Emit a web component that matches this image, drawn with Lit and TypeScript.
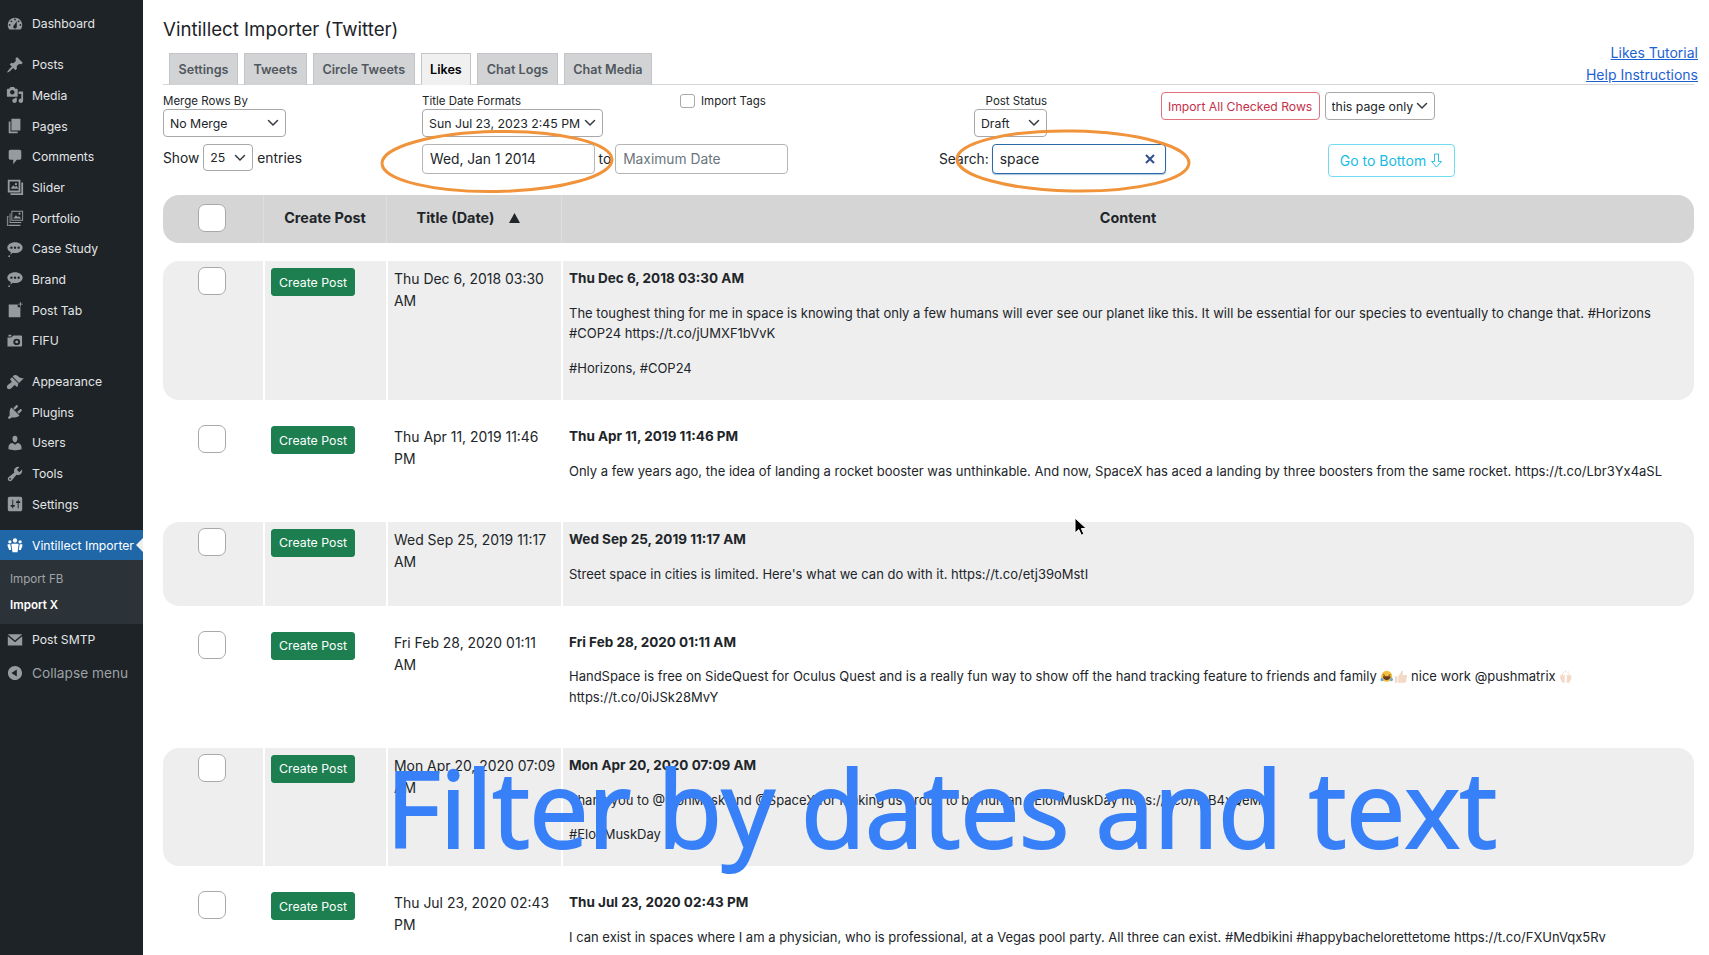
import { LitElement, html, css, svg } from 'lit';
import { customElement } from 'lit/decorators.js';

const chevron = `url("data:image/svg+xml,%3Csvg xmlns='http://www.w3.org/2000/svg' width='12' height='8' viewBox='0 0 12 8'%3E%3Cpath d='M1.500 1.500L6 6l4.500-4.500' fill='none' stroke='%23343a40' stroke-width='1.500' stroke-linecap='round'/%3E%3C/svg%3E")`;

const bubble = svg`<path d="M10 2.500c4.700 0 8.500 2.700 8.500 6s-3.800 6-8.500 6c-.900 0-1.800-.100-2.600-.300L5 16.500l.300-3.300C3 12.100 1.500 10.400 1.500 8.500c0-3.300 3.800-6 8.500-6z"/><circle cx="3.500" cy="18" r="1"/><circle cx="6" cy="8.500" r="1.300" fill="#1d2327"/><circle cx="10" cy="8.500" r="1.300" fill="#1d2327"/><circle cx="14" cy="8.500" r="1.300" fill="#1d2327"/>`;

const icons: Record<string, unknown> = {
  dashboard: svg`<path d="M3.760 16h12.480c1.100-1.370 1.760-3.110 1.760-5 0-4.420-3.580-8-8-8s-8 3.580-8 8c0 1.890.660 3.630 1.760 5zM10 4c.550 0 1 .450 1 1s-.450 1-1 1-1-.450-1-1 .450-1 1-1zM6 6c.550 0 1 .450 1 1s-.450 1-1 1-1-.450-1-1 .450-1 1-1zm8 0c.550 0 1 .450 1 1s-.450 1-1 1-1-.450-1-1 .450-1 1-1zm-5.370 5.550L12 7v6c0 1.100-.900 2-2 2s-2-.900-2-2c0-.570.240-1.080.630-1.450zM4 10c.550 0 1 .450 1 1s-.450 1-1 1-1-.450-1-1 .450-1 1-1zm12 0c.550 0 1 .450 1 1s-.450 1-1 1-1-.450-1-1 .450-1 1-1z" fill-rule="evenodd"/>`,
  pin: svg`<path d="M10.440 3.020l1.820-1.820 6.360 6.350-1.830 1.820c-1.050-.680-2.480-.570-3.410.360l-.750.750c-.920.930-1.040 2.350-.350 3.410l-1.830 1.820-2.410-2.410-2.800 2.790c-.420.420-3.380 2.710-3.800 2.290s1.860-3.390 2.280-3.810l2.790-2.790L4.100 9.360l1.830-1.820c1.050.690 2.480.57 3.400-.360l.750-.750c.930-.920 1.050-2.350.360-3.410z"/>`,
  media: svg`<path fill-rule="evenodd" d="M13 11V4c0-.550-.450-1-1-1h-1.670L9 1H5L3.670 3H2c-.550 0-1 .450-1 1v7c0 .550.450 1 1 1h10c.550 0 1-.450 1-1zM7 4.500c1.380 0 2.500 1.120 2.500 2.500S8.380 9.500 7 9.500 4.500 8.380 4.500 7 5.620 4.500 7 4.500zM14 6h5v10.500c0 1.380-1.120 2.500-2.500 2.500S14 17.880 14 16.500s1.120-2.500 2.500-2.500c.170 0 .340.020.500.050V9h-3V6zm-4 8.050V13h2v3.500c0 1.380-1.120 2.500-2.500 2.500S7 17.880 7 16.500 8.120 14 9.500 14c.170 0 .340.020.500.050z"/>`,
  page: svg`<path d="M6 15V2h10v13H6zm-1 1h8v2H3V5h2v11z"/>`,
  comments: svg`<path d="M5 2h10c1.100 0 2 .900 2 2v7c0 1.100-.900 2-2 2h-3l-4 5v-5H5c-1.100 0-2-.900-2-2V4c0-1.100.900-2 2-2z"/>`,
  slider: svg`<path fill-rule="evenodd" d="M2 2h14v14H2V2zm2 2v10h10V4H4zm1 8l3-4 2 2 1.500-1.500L14 12H5zm6-6.500a1.300 1.300 0 1 1 0 2.600 1.300 1.300 0 0 1 0-2.600zM17 5h2v14H5v-2h12V5z"/>`,
  portfolio: svg`<path fill-rule="evenodd" d="M6 2h13v11H6V2zm1 1v9h11V3H7zm1 7.500l3-3.500 2 2 1.500-1L17 10.500H8zM15 4a1.200 1.200 0 1 1 0 2.400A1.200 1.200 0 0 1 15 4zM4 5h1v9.500h12v1H4V5zM1 8h2v9.500h13v1.500H1V8zm1 1v9.500h.8V9z"/>`,
  bubble,
  postTab: svg`<path fill-rule="evenodd" d="M3 4h10v3h3v11H3V4zM15.500 1h1v2h2v1h-2v2h-1V4h-2V3h2V1z"/>`,
  camera: svg`<path fill-rule="evenodd" d="M3 3h3v2H3V3zm-1 3h4l2-2h8c.600 0 1 .400 1 1v10c0 .600-.400 1-1 1H2V6zm9.500 1.500a3.500 3.500 0 1 0 0 7 3.500 3.500 0 0 0 0-7zm0 2a1.500 1.500 0 1 1 0 3 1.500 1.500 0 0 1 0-3z" transform="translate(-.500 0) scale(1.080 1)"/>`,
  appearance: svg`<path d="M14.480 11.060L7.410 3.990l1.500-1.500c.500-.560 2.300-.470 3.510.320 1.210.800 1.430 1.280 2.910 2.100 1.180.640 2.450 1.260 4.450.850zm-.710.710L6.700 4.700 4.930 6.470c-.390.390-.390 1.020 0 1.410l1.060 1.060c.390.390.390 1.030 0 1.420-.600.600-1.430 1.110-2.210 1.690-.350.260-.700.530-1.010.840C1.430 13.710 1 14.650 1 15.650 1 16.630 1.800 18 3.500 18c1.030 0 1.980-.420 2.820-1.260.500-.500 2.010-2.200 2.660-2.870.380-.380 1.030-.390 1.420 0l1.060 1.060c.390.390 1.020.390 1.410 0z"/>`,
  plugins: svg`<path d="M13.110 4.360L9.870 7.600 8 5.730l3.240-3.240c.350-.340 1.050-.200 1.560.320.520.510.660 1.210.310 1.550zm-8 1.770l.910-1.120 9.010 9.010-1.190.840c-.710.710-2.630 1.160-3.820 1.160H6.140L4.900 17.260c-.590.590-1.540.590-2.120 0-.590-.580-.590-1.530 0-2.120l1.240-1.240v-3.880c0-1.130.400-3.190 1.090-3.890zm7.260 3.970l3.240-3.240c.340-.350 1.040-.210 1.550.310.520.510.660 1.210.310 1.550l-3.240 3.250z"/>`,
  users: svg`<path d="M10 9.250c-2.270 0-2.730-3.440-2.730-3.440C7 4.020 7.820 2 9.970 2c2.160 0 2.980 2.020 2.710 3.810 0 0-.410 3.440-2.680 3.440zm0 2.570L12.720 10c2.390 0 4.520 2.330 4.520 4.530v2.490s-3.650 1.130-7.240 1.130c-3.650 0-7.240-1.130-7.240-1.130v-2.490c0-2.250 1.940-4.480 4.470-4.480z"/>`,
  tools: svg`<path fill-rule="evenodd" d="M16.680 9.770c-1.340 1.340-3.300 1.670-4.950.990l-5.410 6.520c-.990.990-2.590.990-3.580 0s-.990-2.590 0-3.570l6.520-5.420c-.680-1.650-.350-3.610.990-4.950 1.280-1.280 3.120-1.620 4.720-1.060l-2.890 2.890 2.820 2.820 2.860-2.870c.530 1.580.180 3.400-1.080 4.670zM3.810 16.210c.400.390 1.040.390 1.430 0 .400-.400.400-1.040 0-1.430-.390-.400-1.030-.400-1.430 0-.390.390-.390 1.030 0 1.430z"/>`,
  settings: svg`<path fill-rule="evenodd" d="M18 16V4c0-1.100-.900-2-2-2H4c-1.100 0-2 .900-2 2v12c0 1.100.900 2 2 2h12c1.100 0 2-.900 2-2zM8 11h1c.550 0 1 .450 1 1s-.450 1-1 1H8v1.500c0 .280-.220.500-.500.500s-.500-.220-.500-.500V13H6c-.550 0-1-.450-1-1s.450-1 1-1h1V5.500c0-.280.220-.500.500-.500s.500.220.500.500V11zm5-2h-1c-.550 0-1-.450-1-1s.450-1 1-1h1V5.500c0-.280.220-.500.500-.500s.500.220.500.500V7h1c.550 0 1 .450 1 1s-.450 1-1 1h-1v5.500c0 .280-.220.500-.500.500s-.500-.220-.500-.500V9z"/>`,
  groups: svg`<circle cx="10" cy="5" r="2.400"/><circle cx="4.300" cy="6.500" r="1.800"/><circle cx="15.700" cy="6.500" r="1.800"/><path d="M7 8.500h6c.700 0 1 .500 1 1.200L12.800 18H7.200L6 9.700C6 9 6.300 8.500 7 8.500zM2 9.300h2.800l1 6.200H3.500L1.800 11c-.100-1 0-1.700.200-1.700zM18 9.300h-2.800l-1 6.200h2.300l1.700-4.500c.100-1 0-1.700-.200-1.700z"/>`,
  mail: svg`<path d="M2.500 3.500h15c.400 0 .600.200.300.500L10 10.500 2.200 4c-.300-.300-.100-.500.300-.500zM2 5.800l8 6.600 8-6.600V16H2V5.800z"/>`,
  collapse: svg`<path fill-rule="evenodd" d="M10 2.160c4.330 0 7.840 3.510 7.840 7.840S14.330 17.840 10 17.840 2.160 14.330 2.160 10 5.670 2.160 10 2.160zM12 14V6l-6 4z"/>`,
};

type MenuItem = { label: string; icon: string; sep?: boolean; active?: boolean };

const menu: MenuItem[] = [
  { label: 'Dashboard', icon: 'dashboard' },
  { label: 'Posts', icon: 'pin', sep: true },
  { label: 'Media', icon: 'media' },
  { label: 'Pages', icon: 'page' },
  { label: 'Comments', icon: 'comments' },
  { label: 'Slider', icon: 'slider' },
  { label: 'Portfolio', icon: 'portfolio' },
  { label: 'Case Study', icon: 'bubble' },
  { label: 'Brand', icon: 'bubble' },
  { label: 'Post Tab', icon: 'postTab' },
  { label: 'FIFU', icon: 'camera' },
  { label: 'Appearance', icon: 'appearance', sep: true },
  { label: 'Plugins', icon: 'plugins' },
  { label: 'Users', icon: 'users' },
  { label: 'Tools', icon: 'tools' },
  { label: 'Settings', icon: 'settings' },
  { label: 'Vintillect Importer', icon: 'groups', sep: true, active: true },
];

const laugh = html`<svg class="emoji" viewBox="0 0 16 16"><circle cx="8" cy="7.500" r="6.500" fill="#f3c142"/><path d="M3.500 7.500h9c0 3-2 4.500-4.500 4.500s-4.500-1.500-4.500-4.500z" fill="#6b3a1e"/><path d="M2 9c-1.500 1-2 3-.500 4s3-.500 2.500-2zM14 9c1.500 1 2 3 .500 4s-3-.500-2.500-2z" fill="#5aa9e8"/><path d="M3.500 5.500l2.500 1M12.500 5.500l-2.500 1" stroke="#6b3a1e" stroke-width="1" fill="none"/></svg>`;
const thumb = html`<svg class="emoji" viewBox="0 0 16 16"><path d="M1 7.500h3V15H1zM5 7.500l3-4.500c.500-1 .800-2.500 1.800-2.500s1.200 1.500.800 2.800L10 6h4.500c1 0 1.300 1.200.800 2l-1 6c-.200.700-.800 1-1.500 1H5z" fill="#f3d9c6"/></svg>`;
const hands = html`<svg class="emoji" viewBox="0 0 16 16"><path d="M1.500 5.500l1 0 1 2 .200-3.500 1 0 .300 3 .800-1.500 1 .500V15H4L1.500 10.500zM14.500 5.500l-1 0-1 2-.200-3.500-1 0-.300 3-.800-1.500-1 .500V15H12l2.500-4.500z" fill="#f3d9c6"/><path d="M5 2l.300 1M8 1v1.200M11 2l-.300 1" stroke="#999" stroke-width=".6"/></svg>`;

type Row = { date: string; paras: unknown[] };

const rows: Row[] = [
  {
    date: 'Thu Dec 6, 2018 03:30 AM',
    paras: [
      'The toughest thing for me in space is knowing that only a few humans will ever see our planet like this. It will be essential for our species to eventually to change that. #Horizons #COP24 https://t.co/jUMXF1bVvK',
      '#Horizons, #COP24',
    ],
  },
  {
    date: 'Thu Apr 11, 2019 11:46 PM',
    paras: ['Only a few years ago, the idea of landing a rocket booster was unthinkable. And now, SpaceX has aced a landing by three boosters from the same rocket. https://t.co/Lbr3Yx4aSL'],
  },
  {
    date: 'Wed Sep 25, 2019 11:17 AM',
    paras: ["Street space in cities is limited. Here's what we can do with it. https://t.co/etj39oMstI"],
  },
  {
    date: 'Fri Feb 28, 2020 01:11 AM',
    paras: [html`HandSpace is free on SideQuest for Oculus Quest and is a really fun way to show off the hand tracking feature to friends and family ${laugh}${thumb} nice work @pushmatrix ${hands} https://t.co/0iJSk28MvY`],
  },
  {
    date: 'Mon Apr 20, 2020 07:09 AM',
    paras: ['Thank you to @ElonMusk and @SpaceX for making us proud to be human #ElonMuskDay https://t.co/ImB4xQeMv', '#ElonMuskDay'],
  },
  {
    date: 'Thu Jul 23, 2020 02:43 PM',
    paras: ['I can exist in spaces where I am a physician, who is professional, at a Vegas pool party. All three can exist. #Medbikini #happybachelorettetome https://t.co/FXUnVqx5Rv'],
  },
];

const tabs = ['Settings', 'Tweets', 'Circle Tweets', 'Likes', 'Chat Logs', 'Chat Media'];

@customElement('app-root')
export class AppRoot extends LitElement {
  static styles = css`
    :host {
      display: flex;
      position: relative;
      height: 955px;
      overflow: hidden;
      background: #fff;
      color: #212529;
      font-family: Inter, 'Liberation Sans', sans-serif;
      font-size: 14px;
    }

    /* admin menu */
    .sidebar {
      flex: 0 0 143px;
      background: #1d2327;
      padding-top: 8.6px;
      box-sizing: border-box;
      color: #e4e5e6;
      font-size: 12.200px;
    }
    .item {
      display: flex;
      align-items: center;
      height: 30.7px;
      padding-left: 6px;
      gap: 8px;
      white-space: nowrap;
    }
    .item.sep { margin-top: 10px; }
    .item.active {
      position: relative;
      background: #2067a8;
      color: #fff;
      height: 30px;
      margin-top: 10.700px;
    }
    .item.active::after {
      content: '';
      position: absolute;
      right: 0;
      top: 8px;
      border: 7px solid transparent;
      border-right-color: #f0f0f1;
      border-left-width: 0;
    }
    .mi {
      flex: 0 0 18px;
      width: 18px;
      height: 18px;
      fill: #979b9f;
    }
    .active .mi { fill: #fff; }
    .sub {
      background: #2c3338;
      padding: 7px 0 5.500px 10px;
      font-size: 11.600px;
      color: #a0a4a8;
    }
    .sub div { height: 25.5px; line-height: 25.5px; }
    .sub .on { color: #fff; font-weight: 600; }
    .item.collapse { color: #9ea1a5; font-size: 13.700px; height: 36px; }
    .item.mail { margin-top: 0.7px; height: 30.7px; }

    /* main */
    .main {
      flex: 1;
      min-width: 0;
      padding: 0 15px 0 20px;
    }
    .head {
      display: flex;
      justify-content: space-between;
      align-items: flex-end;
      border-bottom: 1px solid #d5d6d8;
      height: 85px;
      box-sizing: border-box;
    }
    h1 {
      margin: 0;
      padding-top: 18px;
      font-size: 18.700px;
      line-height: 23px;
      font-weight: 400;
      color: #1d2327;
    }
    .tabs {
      display: flex;
      gap: 6px;
      margin: 12px 0 -1px 6px;
    }
    .tab {
      height: 32px;
      line-height: 32px;
      box-sizing: border-box;
      padding: 0 8.500px;
      background: #d2d3d5;
      border: 1px solid #c3c4c7;
      border-bottom: none;
      font-size: 12.600px;
      font-weight: 600;
      color: #50575e;
    }
    .tab.on {
      background: #f0f0f1;
      color: #000;
      border-bottom: 1px solid #f0f0f1;
    }
    .links {
      display: flex;
      flex-direction: column;
      align-items: flex-end;
      gap: 6px;
      margin: 0 -4px 0 0;
      padding-bottom: 1px;
      font-size: 14px;
      line-height: 16px;
    }
    .links a { color: #1c62d3; text-decoration: underline; }

    /* filter controls */
    .ctl-a, .ctl-b { display: grid; align-items: start; justify-content: start; }
    .ctl-a {
      grid-template-columns: 259px 258px 294px 186.600px auto auto;
      padding-top: 7px;
      height: 52px;
      box-sizing: border-box;
    }
    .ctl-b {
      grid-template-columns: 259px 517px 389px auto;
      height: 58px;
      box-sizing: border-box;
      padding-top: 7px;
    }
    .lbl { font-size: 11.500px; line-height: 16px; color: #212529; height: 16px; margin-top: 1px; white-space: nowrap; }
    select, input[type='text'] {
      font: inherit;
      color: #212529;
      box-sizing: border-box;
      border: 1px solid #a8a8a8;
      border-radius: 4px;
      background-color: #fff;
      margin: 0;
      outline: none;
    }
    select {
      appearance: none;
      -webkit-appearance: none;
      height: 28px;
      padding: 0 0 0 6px;
      font-size: 12.300px;
      background-image: ${css([chevron] as unknown as TemplateStringsArray)};
      background-repeat: no-repeat;
      background-position: right 6px center;
      display: block;
    }
    .s-merge { width: 122.500px; }
    .s-date { width: 180.500px; }
    .s-status { width: 73px; }
    .s-page { width: 110px; margin-left: 5px; }
    .s-show { width: 50px; height: 27px; }
    .status .lbl { padding-left: 11.600px; }

    .tags { display: flex; align-items: center; gap: 6px; font-size: 11.500px; height: 15px; margin-top: 1px; }
    .tags input {
      appearance: none;
      -webkit-appearance: none;
      width: 15px;
      height: 14px;
      margin: 0;
      border: 1px solid #a8a8a8;
      border-radius: 3px;
      background: #fff;
    }
    .btn-import {
      height: 28px;
      width: 159px;
      box-sizing: border-box;
      border: 1px solid #e0717d;
      border-radius: 4px;
      background: #fff;
      color: #c5304a;
      font: inherit;
      font-size: 12.200px;
      padding: 0;
    }
    .show { display: flex; align-items: center; gap: 4px; font-size: 13.800px; height: 27px; }
    .dates { display: flex; align-items: center; gap: 4px; font-size: 13.800px; }
    .dates input { width: 172.500px; height: 30px; padding: 0 7px; font-size: 13.800px; border-color: #b5b5b5; }
    .dates input::placeholder { color: #6c757d; opacity: 1; }
    .search { display: flex; align-items: center; gap: 3px; height: 30px; font-size: 13.800px; }
    .field { position: relative; }
    .field input {
      width: 174px;
      height: 30px;
      padding: 0 7px;
      font-size: 13.800px;
      border: 1.500px solid #2b6aa6;
      border-radius: 4px;
      box-shadow: 0 1px 1px rgba(34, 113, 177, 0.4);
    }
    .field svg { position: absolute; right: 11px; top: 10px; width: 10px; height: 10px; }
    .btn-bottom {
      display: flex;
      align-items: center;
      justify-content: center;
      gap: 4px;
      width: 127px;
      height: 33px;
      box-sizing: border-box;
      border: 1px solid #6fdcf3;
      border-radius: 4px;
      background: #fff;
      color: #18bbe3;
      font: inherit;
      font-size: 14px;
      padding: 0;
    }
    .btn-bottom svg { width: 13px; height: 15px; }

    /* table */
    .table { display: flex; flex-direction: column; gap: 19px; }
    .tr {
      display: grid;
      grid-template-columns: 100px 123px 175px 1fr;
      border-radius: 16px;
    }
    .thead {
      background: #d5d5d5;
      height: 48px;
      font-weight: 700;
      font-size: 14.400px;
      margin-bottom: -1px;
    }
    .thead > div {
      display: flex;
      align-items: center;
      justify-content: center;
      border-left: 1px solid #dedede;
      padding-bottom: 3px;
    }
    .thead > div:first-child { border-left: none; justify-content: flex-start; }
    .sort { gap: 15px; padding-right: 11px; }
    .sort svg { width: 11px; height: 10px; }
    .tr.odd { background: #eee; }
    .td { padding: 7px 3px 0 6px; border-left: 2px solid transparent; box-sizing: border-box; min-width: 0; }
    .td:first-child { border-left: none; padding: 6px 0 0; }
    .odd .td { border-left-color: #fff; }
    .odd .td:first-child { border-left: none; }
    .check {
      appearance: none;
      -webkit-appearance: none;
      display: block;
      width: 28px;
      height: 28px;
      margin: 0 0 0 34.500px;
      box-sizing: border-box;
      border: 1.500px solid #a9a9a9;
      border-radius: 7px;
      background: #fff;
    }
    .create {
      display: block;
      width: 84px;
      height: 28px;
      margin: 0;
      padding: 0;
      box-sizing: border-box;
      border: 1px solid #1d7f50;
      border-radius: 3px;
      background: #1d7f50;
      color: #fff;
      font: inherit;
      font-size: 12.300px;
    }
    .date { line-height: 22px; font-size: 13.950px; }
    .content { font-size: 13px; line-height: 20.700px; padding-right: 8px; }
    .content strong { display: block; font-weight: 700; font-size: 13.500px; }
    .content p { margin: 14px 0 0; }
    .content p:last-child { margin-bottom: 21.300px; }
    .emoji { width: 13.500px; height: 13.500px; vertical-align: -2px; }

    /* annotations drawn over the page */
    .marks { position: absolute; inset: 0; width: 100%; height: 100%; pointer-events: none; }
    .caption {
      position: absolute;
      left: 386px;
      top: 742px;
      font-family: 'Open Sans', sans-serif;
      font-size: 105.500px;
      font-weight: 400;
      -webkit-text-stroke: 2px #3880f8;
      letter-spacing: -0.5px;
      line-height: 130px;
      color: #3880f8;
      white-space: nowrap;
      pointer-events: none;
    }
  `;

  renderRow(row: Row, i: number) {
    return html`<div class="tr ${i % 2 === 0 ? 'odd' : ''}">
      <div class="td"><input class="check" type="checkbox" /></div>
      <div class="td"><button class="create">Create Post</button></div>
      <div class="td date">${row.date}</div>
      <div class="td content"><strong>${row.date}</strong>${row.paras.map((p) => html`<p>${p}</p>`)}</div>
    </div>`;
  }

  render() {
    return html`
      <nav class="sidebar">
        ${menu.map(
          (m) => html`<div class="item ${m.sep ? 'sep' : ''} ${m.active ? 'active' : ''}">
            <svg class="mi" viewBox="0 0 20 20">${icons[m.icon]}</svg>${m.label}
          </div>`
        )}
        <div class="sub"><div>Import FB</div><div class="on">Import X</div></div>
        <div class="item mail"><svg class="mi" viewBox="0 0 20 20">${icons.mail}</svg>Post SMTP</div>
        <div class="item collapse"><svg class="mi" viewBox="0 0 20 20">${icons.collapse}</svg>Collapse menu</div>
      </nav>

      <main class="main">
        <div class="head">
          <div>
            <h1>Vintillect Importer (Twitter)</h1>
            <div class="tabs">
              ${tabs.map((t) => html`<div class="tab ${t === 'Likes' ? 'on' : ''}">${t}</div>`)}
            </div>
          </div>
          <div class="links"><a href="#">Likes Tutorial</a><a href="#">Help Instructions</a></div>
        </div>

        <div class="ctl-a">
          <div>
            <div class="lbl">Merge Rows By</div>
            <select class="s-merge"><option>No Merge</option></select>
          </div>
          <div>
            <div class="lbl">Title Date Formats</div>
            <select class="s-date"><option>Sun Jul 23, 2023 2:45 PM</option></select>
          </div>
          <label class="tags"><input type="checkbox" />Import Tags</label>
          <div class="status">
            <div class="lbl">Post Status</div>
            <select class="s-status"><option>Draft</option></select>
          </div>
          <button class="btn-import">Import All Checked Rows</button>
          <select class="s-page"><option>this page only</option></select>
        </div>

        <div class="ctl-b">
          <div class="show">Show <select class="s-show"><option>25</option></select> entries</div>
          <div class="dates">
            <input type="text" value="Wed, Jan 1 2014" /><span>to</span><input type="text" placeholder="Maximum Date" />
          </div>
          <div class="search">
            Search:
            <div class="field">
              <input type="text" value="space" />
              <svg viewBox="0 0 10 10"><path d="M1 1l8 8M9 1l-8 8" stroke="#2e4f8a" stroke-width="2" /></svg>
            </div>
          </div>
          <button class="btn-bottom">
            Go to Bottom
            <svg viewBox="0 0 13 15"><path d="M4.500 1h4v7.500h3L6.500 14 1.500 8.500h3z" fill="none" stroke="#2cc0e4" /></svg>
          </button>
        </div>

        <div class="table">
          <div class="tr thead">
            <div><input class="check" type="checkbox" /></div>
            <div>Create Post</div>
            <div class="sort">Title (Date)<svg viewBox="0 0 11 10"><path d="M5.500 0L11 10H0z" fill="#212529" /></svg></div>
            <div>Content</div>
          </div>
          ${rows.map((r, i) => this.renderRow(r, i))}
        </div>
      </main>

      <svg class="marks" viewBox="0 0 1709 955">
        <ellipse cx="497" cy="161.500" rx="115" ry="30" fill="none" stroke="#f0933a" stroke-width="3" transform="rotate(-1 497 161.500)" />
        <ellipse cx="1073" cy="161" rx="116" ry="30" fill="none" stroke="#f0933a" stroke-width="3" transform="rotate(1 1073 161)" />
        <path d="M1075 518v15l3.800-3.400 2.500 5.600 2.600-1.100-2.500-5.500h5z" fill="#000" stroke="#fff" stroke-width="1" />
      </svg>
      <div class="caption">Filter by dates and text</div>
    `;
  }
}
